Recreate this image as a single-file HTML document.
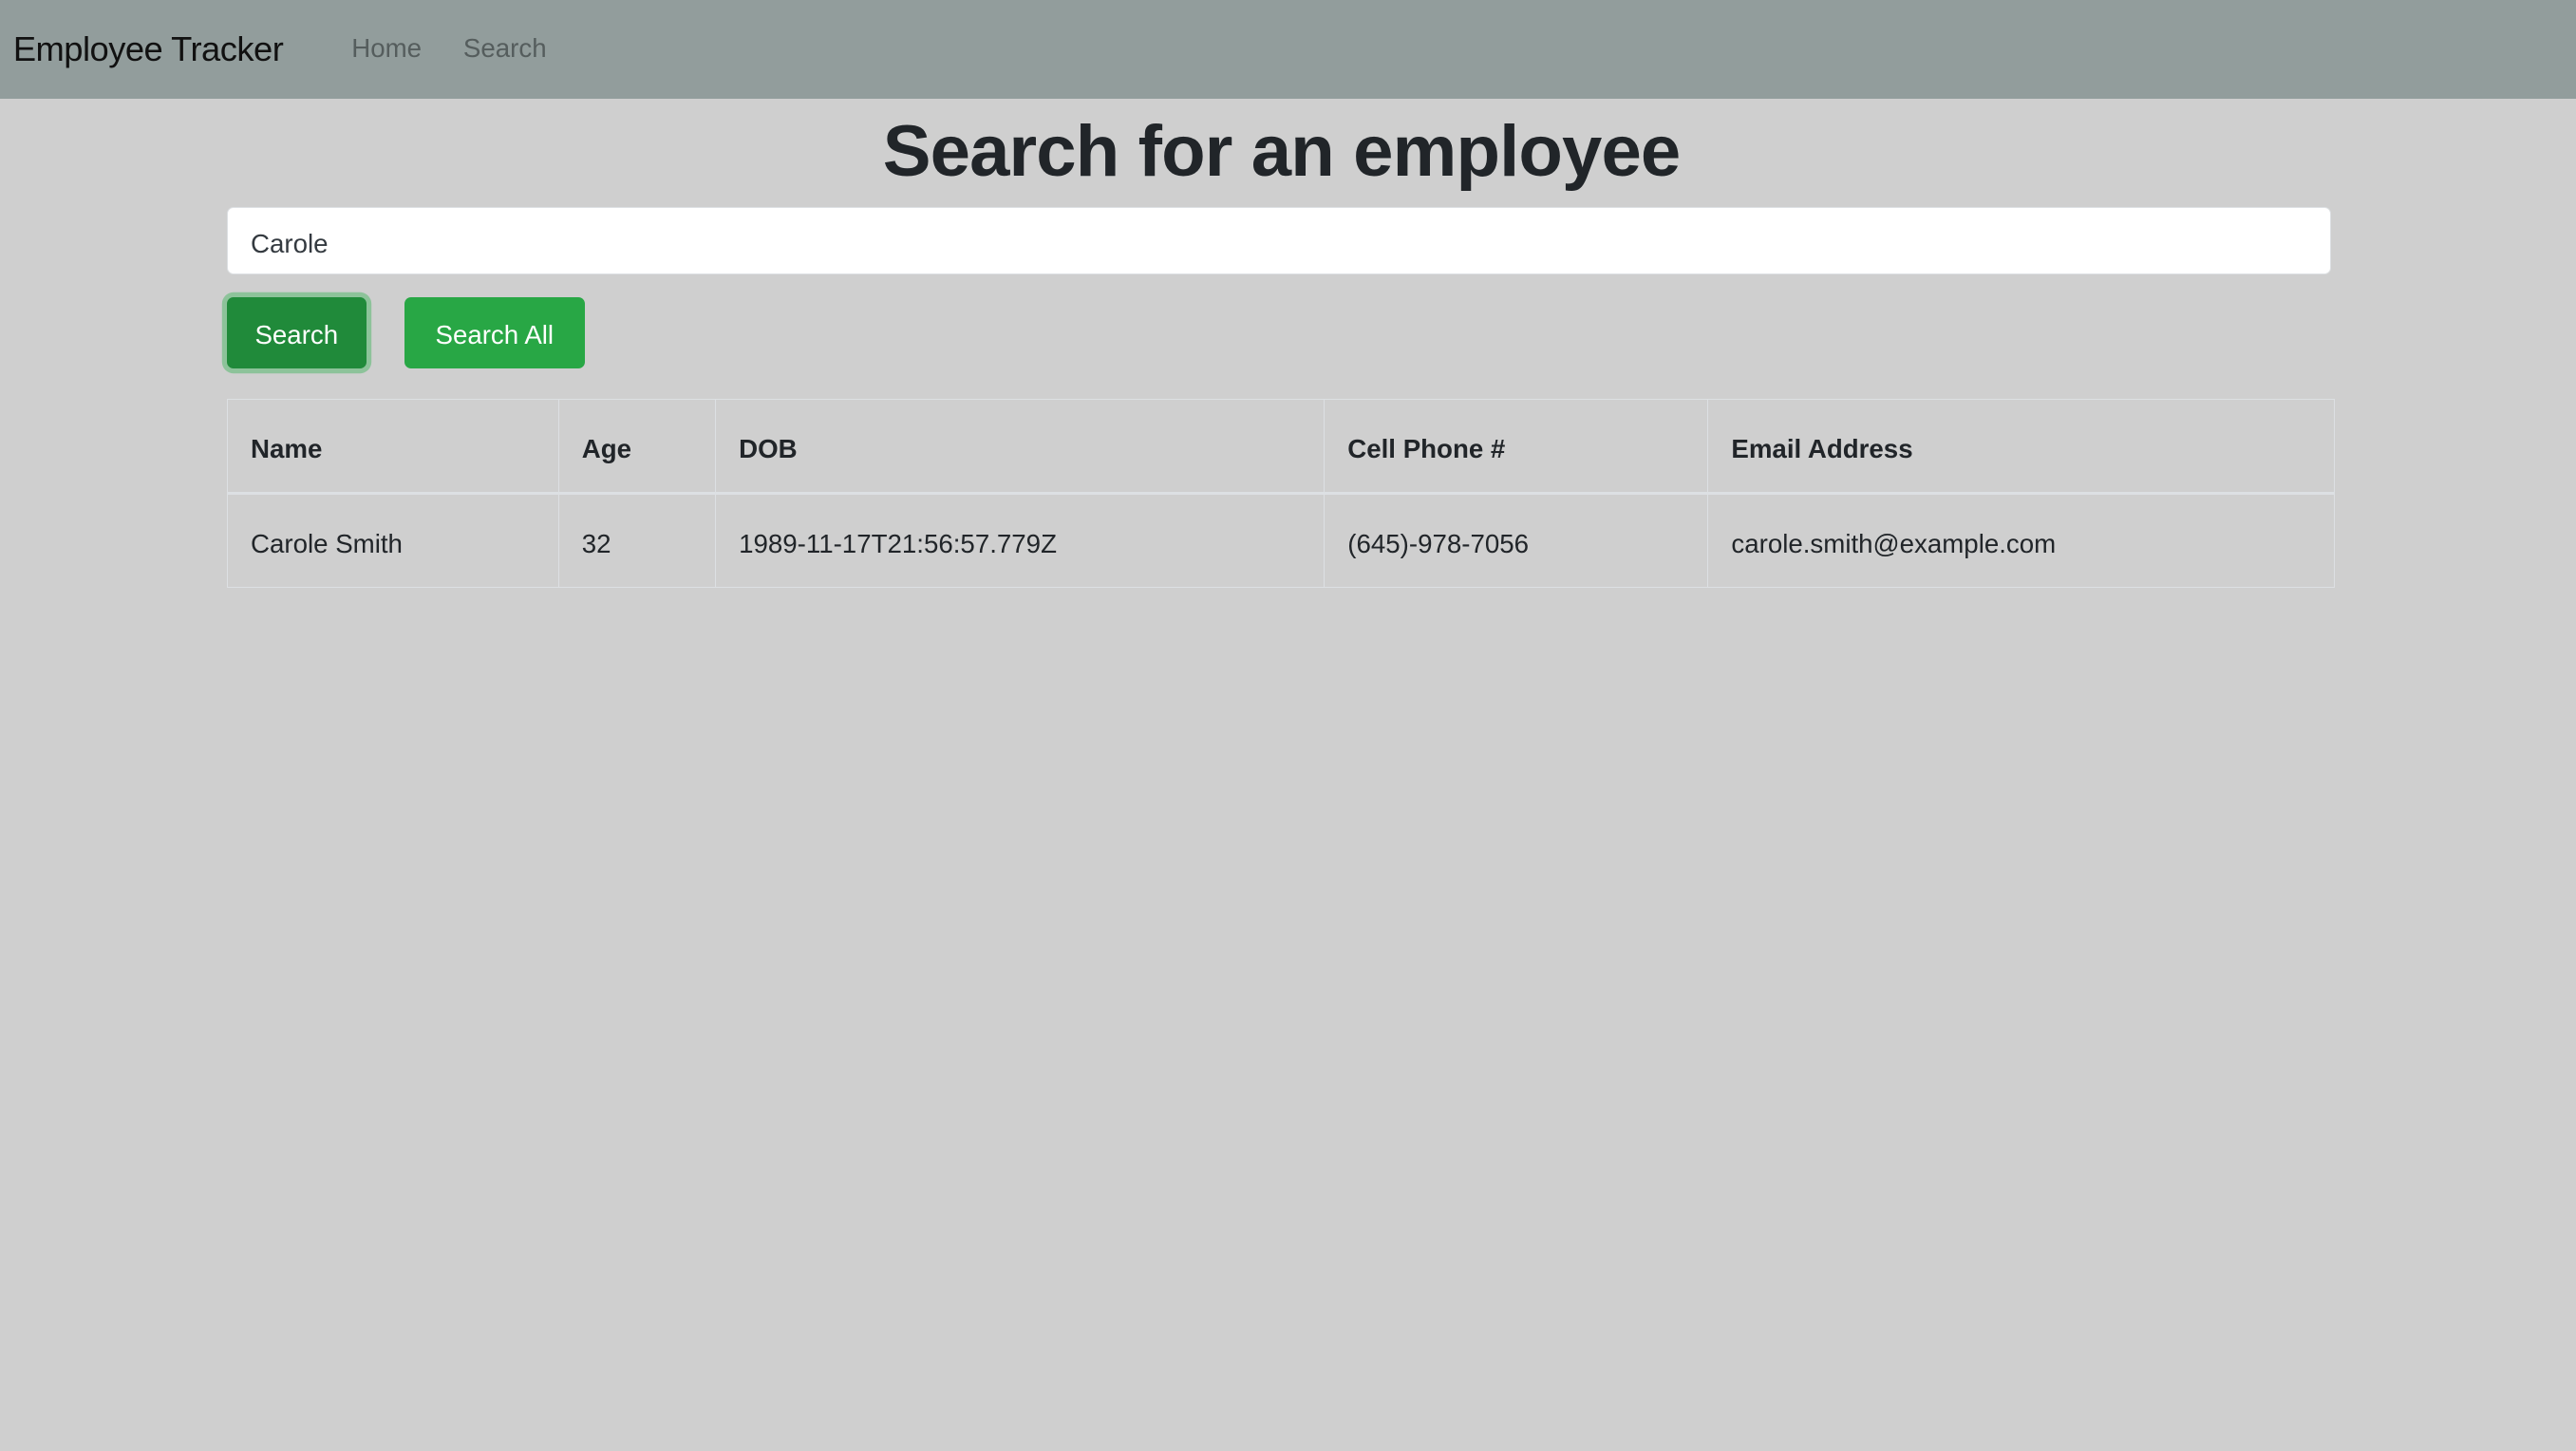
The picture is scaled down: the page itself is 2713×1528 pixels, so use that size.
<!DOCTYPE html>
<html><head><meta charset="utf-8"><style>
html,body{margin:0;padding:0}
body{width:1568px;height:883px;zoom:1.7302;background:#cfcfcf;font-family:"Liberation Sans",sans-serif;color:#212529;overflow:hidden;position:relative}
.nav{position:absolute;left:0;top:0;width:1568px;height:60px;background:#929d9c}
.brand{position:absolute;left:8px;top:18px;font-size:21px;color:#111;letter-spacing:-0.3px}
.link{position:absolute;top:20px;font-size:16px;color:#555d5d}
h1{position:absolute;left:0;width:1560px;top:65px;margin:0;text-align:center;font-size:44px;font-weight:bold;letter-spacing:-0.5px;line-height:56px}
.inp{position:absolute;left:138px;top:126px;width:1280px;height:40px;background:#fff;border:1px solid #dde0e3;border-radius:4px}
.inp span{position:absolute;left:14px;top:13px;font-size:16px;color:#343a40}
.btn{position:absolute;top:181px;height:43px;border-radius:4px;color:#fff;font-size:16px;text-align:center;line-height:46px}
.b1{left:138px;width:85px;background:#208a3a;box-shadow:0 0 0 3px #8dc39a}
.b2{left:246px;width:110px;background:#28a745}
table{position:absolute;left:138px;top:243px;width:1283px;border-collapse:collapse}
td,th{border:1px solid #dde0e3;padding:4px 14px 0;text-align:left;font-size:16px;height:52px}
th{font-weight:bold;border-bottom:2px solid #dde0e3}
</style></head><body>
<div class="nav"><div class="brand">Employee Tracker</div><div class="link" style="left:214px">Home</div><div class="link" style="left:282px">Search</div></div>
<h1>Search for an employee</h1>
<div class="inp"><span>Carole</span></div>
<div class="btn b1">Search</div>
<div class="btn b2">Search All</div>
<table>
<tr><th style="width:173px">Name</th><th style="width:67px">Age</th><th style="width:342px">DOB</th><th style="width:205px">Cell Phone #</th><th>Email Address</th></tr>
<tr><td>Carole Smith</td><td>32</td><td>1989-11-17T21:56:57.779Z</td><td>(645)-978-7056</td><td>carole.smith@example.com</td></tr>
</table>
</body></html>
